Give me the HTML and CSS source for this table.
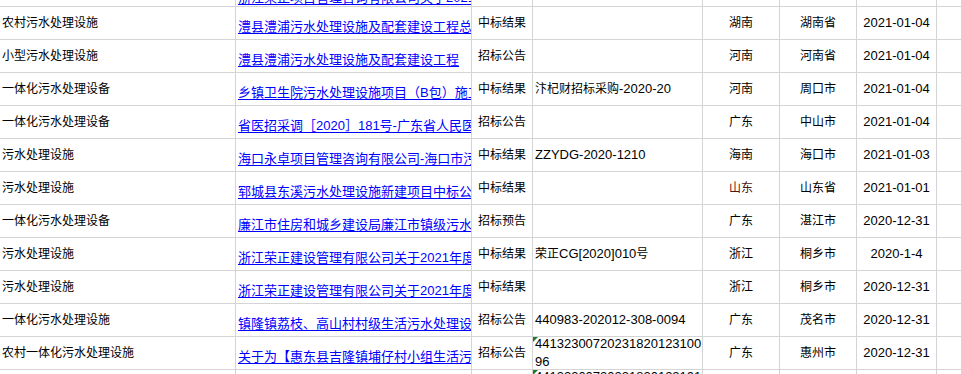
FILE: index.html
```html
<!DOCTYPE html>
<html lang="zh-CN">
<head>
    <meta charset="UTF-8">
    <title>污水处理设施招标信息</title>
    <link rel="stylesheet" href="styles.css">
</head>
<body>
    <!-- hoja desplazada: la primera fila queda cortada arriba -->
    <div class="sheet">
        <div class="row">
            <div class="cell"></div>
            <div class="cell link first"><a href="#">浙江荣正项目管理咨询有限公司关于2021年度污水处理设施</a></div>
            <div class="cell mid"></div>
            <div class="cell num"></div>
            <div class="cell mid"></div>
            <div class="cell mid"></div>
            <div class="cell mid num"></div>
            <div class="cell"></div>
        </div>
        <div class="row">
            <div class="cell">农村污水处理设施</div>
            <div class="cell link"><a href="#">澧县澧浦污水处理设施及配套建设工程总承包</a></div>
            <div class="cell mid">中标结果</div>
            <div class="cell num"></div>
            <div class="cell mid">湖南</div>
            <div class="cell mid">湖南省</div>
            <div class="cell mid num">2021-01-04</div>
            <div class="cell"></div>
        </div>
        <div class="row">
            <div class="cell">小型污水处理设施</div>
            <div class="cell link"><a href="#">澧县澧浦污水处理设施及配套建设工程</a></div>
            <div class="cell mid">招标公告</div>
            <div class="cell num"></div>
            <div class="cell mid">河南</div>
            <div class="cell mid">河南省</div>
            <div class="cell mid num">2021-01-04</div>
            <div class="cell"></div>
        </div>
        <div class="row">
            <div class="cell">一体化污水处理设备</div>
            <div class="cell link"><a href="#">乡镇卫生院污水处理设施项目（B包）施工</a></div>
            <div class="cell mid">中标结果</div>
            <div class="cell num"><span class="zh">汴杞财招标采购</span>-2020-20</div>
            <div class="cell mid">河南</div>
            <div class="cell mid">周口市</div>
            <div class="cell mid num">2021-01-04</div>
            <div class="cell"></div>
        </div>
        <div class="row">
            <div class="cell">一体化污水处理设备</div>
            <div class="cell link"><a href="#">省医招采调［2020］181号-广东省人民医院</a></div>
            <div class="cell mid">招标公告</div>
            <div class="cell num"></div>
            <div class="cell mid">广东</div>
            <div class="cell mid">中山市</div>
            <div class="cell mid num">2021-01-04</div>
            <div class="cell"></div>
        </div>
        <div class="row">
            <div class="cell">污水处理设施</div>
            <div class="cell link"><a href="#">海口永卓项目管理咨询有限公司-海口市污水</a></div>
            <div class="cell mid">中标结果</div>
            <div class="cell num">ZZYDG-2020-1210</div>
            <div class="cell mid">海南</div>
            <div class="cell mid">海口市</div>
            <div class="cell mid num">2021-01-03</div>
            <div class="cell"></div>
        </div>
        <div class="row">
            <div class="cell">污水处理设施</div>
            <div class="cell link"><a href="#">郓城县东溪污水处理设施新建项目中标公告</a></div>
            <div class="cell mid">中标结果</div>
            <div class="cell num"></div>
            <div class="cell mid red">山东</div>
            <div class="cell mid">山东省</div>
            <div class="cell mid num">2021-01-01</div>
            <div class="cell"></div>
        </div>
        <div class="row">
            <div class="cell">一体化污水处理设备</div>
            <div class="cell link"><a href="#">廉江市住房和城乡建设局廉江市镇级污水处理</a></div>
            <div class="cell mid">招标预告</div>
            <div class="cell num"></div>
            <div class="cell mid">广东</div>
            <div class="cell mid">湛江市</div>
            <div class="cell mid num">2020-12-31</div>
            <div class="cell"></div>
        </div>
        <div class="row">
            <div class="cell">污水处理设施</div>
            <div class="cell link"><a href="#">浙江荣正建设管理有限公司关于2021年度污水</a></div>
            <div class="cell mid">中标结果</div>
            <div class="cell num"><span class="zh">荣正</span>CG[2020]010<span class="zh">号</span></div>
            <div class="cell mid">浙江</div>
            <div class="cell mid">桐乡市</div>
            <div class="cell mid num">2020-1-4</div>
            <div class="cell"></div>
        </div>
        <div class="row">
            <div class="cell">污水处理设施</div>
            <div class="cell link"><a href="#">浙江荣正建设管理有限公司关于2021年度污水</a></div>
            <div class="cell mid">中标结果</div>
            <div class="cell num"></div>
            <div class="cell mid">浙江</div>
            <div class="cell mid">桐乡市</div>
            <div class="cell mid num">2020-12-31</div>
            <div class="cell"></div>
        </div>
        <div class="row">
            <div class="cell">一体化污水处理设施</div>
            <div class="cell link"><a href="#">镇隆镇荔枝、高山村村级生活污水处理设施</a></div>
            <div class="cell mid">招标公告</div>
            <div class="cell num">440983-202012-308-0094</div>
            <div class="cell mid">广东</div>
            <div class="cell mid">茂名市</div>
            <div class="cell mid num">2020-12-31</div>
            <div class="cell"></div>
        </div>
        <div class="row">
            <div class="cell">农村一体化污水处理设施</div>
            <div class="cell link"><a href="#">关于为【惠东县吉隆镇埔仔村小组生活污水</a></div>
            <div class="cell mid">招标公告</div>
            <div class="cell num wrap text-num">4413230072023182012310096</div>
            <div class="cell mid">广东</div>
            <div class="cell mid">惠州市</div>
            <div class="cell mid num">2020-12-31</div>
            <div class="cell"></div>
        </div>
        <div class="row">
            <div class="cell">农村一体化污水处理设施</div>
            <div class="cell link"><a href="#">关于为【惠东县吉隆镇埔仔村小组生活污水</a></div>
            <div class="cell mid">招标公告</div>
            <div class="cell num wrap text-num">4413230072023182012310197</div>
            <div class="cell mid">广东</div>
            <div class="cell mid">惠州市</div>
            <div class="cell mid num">2020-12-31</div>
            <div class="cell"></div>
        </div>
    </div>
</body>
</html>
```

FILE: styles.css
```css
/* página completa, sin márgenes */
html, body {
    margin: 0;
    height: 100%;
    overflow: hidden;
    background: #fff;
}

/* hoja de cálculo desplazada hacia arriba */
.sheet {
    margin-top: -26px;
    font-family: "Liberation Sans", "Noto Sans CJK SC", sans-serif;
    font-size: 12px;
    color: #000;
}

/* cada fila usa las mismas columnas */
.row {
    display: grid;
    grid-template-columns: 236px 236px 61px 170px 77px 77px 80px 1fr;
    height: 33px;
}

.cell {
    position: relative;
    box-sizing: border-box;
    height: 33px;
    display: flex;
    align-items: center;
    padding: 0 2px;
    border-right: 1px solid #d4d4d4;
    border-bottom: 1px solid #d4d4d4;
    white-space: nowrap;
    overflow: hidden;
    line-height: 16px;
}

/* columna de enlaces: abajo, cortada en el borde */
.cell.link {
    align-items: flex-end;
    padding-right: 0;
    padding-bottom: 4px;
    font-size: 13px;
}
.cell.link.first {
    padding-bottom: 0;
}
.cell.link a {
    min-width: 0;
    overflow: hidden;
    color: #0000ff;
    text-decoration: underline;
    text-underline-offset: 2px;
}

/* texto centrado */
.cell.mid {
    justify-content: center;
}

/* celda con texto en rojo oscuro */
.cell.red {
    color: #4e1616;
}

/* números y códigos */
.cell.num {
    font-size: 13px;
}
.cell.num .zh {
    font-size: 12px;
}

/* número guardado como texto, en dos líneas */
.cell.wrap {
    padding-right: 0;
    white-space: normal;
    word-break: break-all;
    line-height: 18px;
    overflow: visible;
}
.cell.text-num::before {
    content: "";
    position: absolute;
    top: 0;
    left: 0;
    border-top: 5px solid #1e7b34;
    border-right: 5px solid transparent;
}
```
